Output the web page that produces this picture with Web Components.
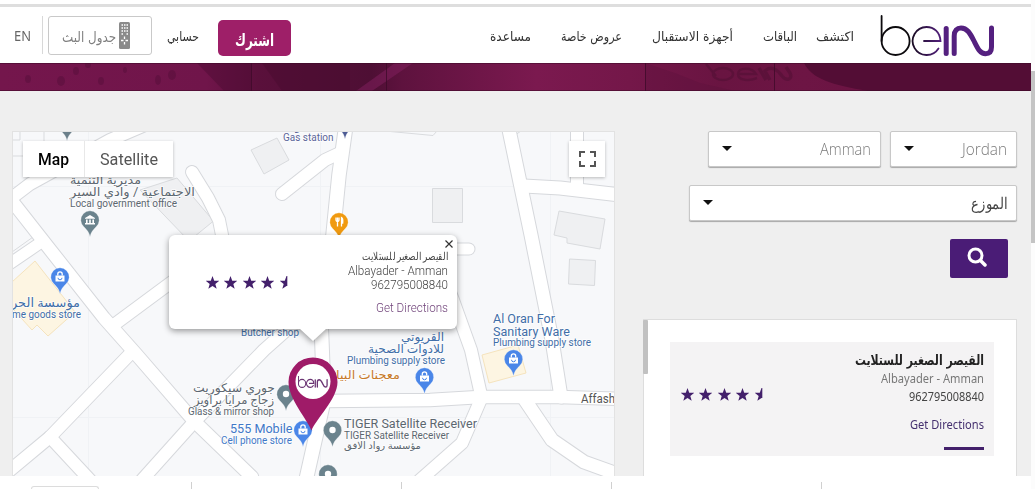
<!DOCTYPE html>
<html lang="ar">
<head>
<meta charset="utf-8">
<title>beIN</title>
<style>
  body {
    margin: 0;
    width: 1035px;
    height: 489px;
    overflow: hidden;
    background: #fff;
    font-family: "Noto Sans", "DejaVu Sans", sans-serif;
  }
</style>
</head>
<body>
<bein-page></bein-page>

<script>
// Text squeezed or stretched to a fixed width
class FitText extends HTMLElement {
  connectedCallback() {
    if (this.shadowRoot) return;
    const w = Number(this.getAttribute('w'));
    this.attachShadow({ mode: 'open' });
    this.shadowRoot.innerHTML = `
      <style>
        :host { display: block; direction: ltr; width: ${w}px; white-space: nowrap; flex: none; }
        span { display: inline-block; transform-origin: 0 50%; }
      </style>
      <span><slot></slot></span>
    `;
    const span = this.shadowRoot.querySelector('span');
    new ResizeObserver(([entry]) => {
      span.style.transform = `scaleX(${w / entry.contentRect.width})`;
    }).observe(span);
  }
}
customElements.define('fit-text', FitText);

class BeinLogo extends HTMLElement {
  connectedCallback() {
    this.attachShadow({ mode: 'open' });
    const mono = this.getAttribute('mono');
    const thin = this.getAttribute('thin') || 1.8;
    this.shadowRoot.innerHTML = `
      <style>
        :host { display: block; flex: none; }
        svg { display: block; width: 100%; height: 100%; }
      </style>
      <svg viewBox="0 0 115 42" fill="none" stroke-linecap="round" preserveAspectRatio="none">
        <defs>
          <linearGradient id="fade" x1="30" x2="62" y1="0" y2="0" gradientUnits="userSpaceOnUse">
            <stop offset="0" stop-color="${mono || '#150a1c'}"/>
            <stop offset="1" stop-color="${mono || '#54207f'}"/>
          </linearGradient>
        </defs>
        <path d="M1.6 1V26" stroke="${mono || '#0c0a0d'}" stroke-width="${thin}"/>
        <circle cx="15.6" cy="26" r="14" stroke="${mono || '#0c0a0d'}" stroke-width="${thin}"/>
        <path d="M44 26H60.500C60 17 54 12 46.500 12A14 14 0 1 0 58.500 33.500" stroke="url(#fade)" stroke-width="${thin}"/>
        <path d="M66.200 13.500V38.500" stroke="${mono || '#54207f'}" stroke-width="5"/>
        <path d="M74.200 38.500V21C74.200 15.500 77 13 81 13C87 13 90 18 94 26C98 34 100 38.700 105.500 38.700C110 38.700 111.500 36 111.500 32V13" stroke="${mono || '#54207f'}" stroke-width="5"/>
      </svg>
    `;
  }
}
customElements.define('bein-logo', BeinLogo);

class StarRating extends HTMLElement {
  connectedCallback() {
    this.attachShadow({ mode: 'open' });
    const star = '<svg viewBox="0 0 24 24"><path d="M12 0l3.200 8.600 9 .4-7 5.600 2.500 8.900L12 18.400 4.300 23.500l2.500-8.900-7-5.600 9-.4z"/></svg>';
    const half = '<svg viewBox="0 0 24 24"><path d="M13.500 0V18.400H12L4.300 23.500l2.500-8.900-7-5.600 9-.4L12 0z"/></svg>';
    this.shadowRoot.innerHTML = `
      <style>
        :host { display: flex; direction: ltr; gap: 5.4px; }
        svg { width: 13px; height: 13px; fill: #43206b; }
      </style>
      ${star.repeat(4)}${half}
    `;
  }
}
customElements.define('star-rating', StarRating);

class SiteHeader extends HTMLElement {
  connectedCallback() {
    this.attachShadow({ mode: 'open' });
    this.shadowRoot.innerHTML = `
      <style>
        :host { display: block; background: #fff; }
        .rule { height: 3px; margin-top: 4px; background: #dedede; }
        header {
          direction: rtl;
          display: flex;
          align-items: center;
          box-sizing: border-box;
          height: 56px;
          padding: 0 36px 0 14px;
          color: #333;
          font: 13px/24px "DejaVu Sans", sans-serif;
        }
        bein-logo { width: 115px; height: 42px; margin-top: 1px; margin-left: 26px; }
        nav { display: flex; flex: 1; margin-top: 4px; }
        nav fit-text { margin-left: 30px; }
        nav fit-text:first-child { margin-left: 19px; }
        .subscribe {
          display: flex;
          align-items: center;
          justify-content: center;
          width: 73px;
          height: 36px;
          margin: 6px 0 0 19px;
          background: #9e1f68;
          border-radius: 5px;
          color: #fff;
          font-size: 17px;
          font-weight: bold;
        }
        .subscribe fit-text { margin-top: 3px; }
        .account { margin: 4px 0 0 15px; }
        .schedule {
          display: flex;
          align-items: center;
          box-sizing: border-box;
          width: 104px;
          height: 39px;
          padding: 3px 21px 0 0;
          gap: 3px;
          border: 1px solid #c9c9c9;
          border-radius: 3px;
          color: #808080;
          font-size: 14px;
        }
        .schedule svg { width: 11px; height: 27px; margin-top: -3px; }
        .split { width: 1px; height: 38px; margin: 0 5px 0 11px; background: #d8d8d8; }
        .lang { color: #666; font: 15px/20px "Noto Sans", sans-serif; }
      </style>
      <div class="rule"></div>
      <header>
        <bein-logo></bein-logo>
        <nav>
          <fit-text w="38">اكتشف</fit-text>
          <fit-text w="34">الباقات</fit-text>
          <fit-text w="81">أجهزة الاستقبال</fit-text>
          <fit-text w="61">عروض خاصة</fit-text>
          <fit-text w="41">مساعدة</fit-text>
        </nav>
        <div class="subscribe"><fit-text w="39">اشترك</fit-text></div>
        <fit-text class="account" w="32">حسابي</fit-text>
        <div class="schedule">
          <svg viewBox="0 0 11 27">
            <rect width="11" height="27" rx="1.500" fill="#8b8b8b"/>
            <path d="M2.500 3h1.500M5 3h1.500M7.500 3h1.500M2.500 6h1.500M5 6h1.500M7.500 6h1.500M2.500 9h1.500M5 9h1.500M7.500 9h1.500M2.500 12h1.500M7.500 12h1.500M2 18.500h2.500M6.500 18.500h2.500M5.500 14.500v2.500M5.500 20v2.500" stroke="#fff" stroke-width="1.300"/>
          </svg>
          <fit-text w="54">جدول البث</fit-text>
        </div>
        <div class="split"></div>
        <fit-text class="lang" w="17">EN</fit-text>
      </header>
    `;
  }
}
customElements.define('site-header', SiteHeader);

class HeroStrip extends HTMLElement {
  connectedCallback() {
    this.attachShadow({ mode: 'open' });
    this.shadowRoot.innerHTML = `
      <style>
        :host { display: block; height: 28px; }
        svg { display: block; }
      </style>
      <svg width="1031" height="28" viewBox="0 0 1031 28">
        <defs>
          <linearGradient id="bg">
            <stop offset="0" stop-color="#74164c"/>
            <stop offset=".2" stop-color="#70154a"/>
            <stop offset=".25" stop-color="#5a103b"/>
            <stop offset=".36" stop-color="#4e0f34"/>
            <stop offset=".39" stop-color="#5e123e"/>
            <stop offset=".52" stop-color="#7b194f"/>
            <stop offset=".61" stop-color="#741749"/>
            <stop offset=".7" stop-color="#691441"/>
            <stop offset=".78" stop-color="#6d1544"/>
            <stop offset="1" stop-color="#650f3f"/>
          </linearGradient>
        </defs>
        <rect width="1031" height="28" fill="url(#bg)"/>
        <path d="M197 0H251V28H224Z" fill="#4d0c34" opacity=".5"/>
        <path d="M262 0H350V28H282Z" fill="#470b2f" opacity=".45"/>
        <path d="M356 28L395 0H413L372 28Z" fill="#842060" opacity=".5"/>
        <path d="M675 10L700 20L735 28H645V0Z" fill="#541036" opacity=".25"/>
        <path d="M804 0C812 16 832 22 868 28H1031V0Z" fill="#530d35"/>
        <g fill="#45092f" opacity=".3">
          <ellipse cx="28" cy="16" rx="3" ry="4"/><ellipse cx="61" cy="18" rx="4" ry="5"/>
          <ellipse cx="76" cy="8" rx="3" ry="4"/><ellipse cx="101" cy="18" rx="3" ry="4"/>
          <ellipse cx="158" cy="17" rx="3" ry="5"/><ellipse cx="172" cy="12" rx="4" ry="5"/>
          <ellipse cx="88" cy="2" rx="3" ry="3"/><ellipse cx="125" cy="7" rx="2" ry="3"/>
        </g>
        <path d="M251.500 0V28M386.500 0V28M645.500 0V28M774.500 0V28" stroke="#3c0a28" opacity=".75"/>
        <path d="M0 .5H1031M0 27.500H1031" stroke="#3c0a28" opacity=".5"/>
        <g fill="none" stroke="#430c2c" stroke-width="2.500" opacity=".35">
          <path d="M706 1L716 13"/><ellipse cx="723" cy="11" rx="10" ry="6"/>
          <path d="M737 11H756C752 4 738 4 738 11C738 18 750 18 757 15"/>
          <path d="M759 5L766 17M770 17L765 8C771 2 778 7 782 13C787 19 793 16 790 10L786 4" stroke-width="3.500"/>
        </g>
      </svg>
    `;
  }
}
customElements.define('hero-strip', HeroStrip);

// Roads: points and width, in map canvas units
const ROADS = [
  ['5,203 30,184 110,140 145,125', 12],
  ['8,196 48,247 104,318 136,354 194,421 252,477', 12.5],
  ['5,267 40,243', 11],
  ['115,324 169,284 200,262', 12],
  ['282,194 325,160 342,152', 12],
  ['192,172 208,198 219,220 224,245', 12],
  ['346,125 339,175 333,235 320,300 322,345 324,400 306,480', 13.5],
  ['325,401 430,400 480,397 560,397 620,399', 12.5],
  ['420,480 462,443 481,399', 12],
  ['440,268 453,300 471,350 481,395', 12],
  ['508,125 531,235 552,340 561,397', 13],
  ['524,186 560,188 620,195', 13],
  ['525,400 552,440 584,462 620,475', 13],
  ['130,354 50,437 8,472', 12],
  ['50,437 90,480', 12],
  ['194,422 142,480', 12],
  ['194,422 264,350 300,318', 12],
  ['440,249 469,249', 11],
  ['577,125 577,187', 12]
];

const PINS = [
  [67, 124, '#6b7f8a', 'dot'], [345, 122, '#4d5c94', 'dot'],
  [90, 220, '#6b838d', 'office'], [339, 222, '#f09a10', 'food'],
  [60, 277, '#4a86e8', 'bag'], [424.5, 377, '#4a86e8', 'bag'],
  [513.5, 359, '#4a86e8', 'bag'], [286, 394, '#6b838d', 'dot'],
  [303, 430, '#4a86e8', 'bag'], [332.5, 430, '#6b838d', 'dot'],
  [328, 474, '#6b838d', 'dot']
];

const GLYPHS = {
  dot: '<circle r="3.200" fill="#fff"/>',
  bag: '<path d="M-4.500-1.500h9v6h-9z" fill="#fff"/><path d="M-2.200-1.500v-1.500a2.200 2.200 0 0 1 4.400 0v1.500" fill="none" stroke="#fff" stroke-width="1.300"/><path d="M-2 .8a2 2 0 0 0 4 0" fill="none" stroke="#4a86e8"/>',
  food: '<path d="M-3-4.500v2.500a1.500 1.500 0 0 0 3 0v-2.500M-1.500-4.500v9M2.500 4.500v-9c1.500.8 1.500 3 1.200 5.500h-1.200" fill="none" stroke="#fff" stroke-width="1.300"/>',
  office: '<path d="M-5-2l5-3 5 3v.8h-10zM-4-.5h1.600v3.500h-1.600zM-.8-.5h1.600v3.500h-1.600zM2.400-.5h1.600v3.500h-1.600zM-5 3h10v1.500h-10z" fill="#fff"/>'
};

// Labels: text, left, right, baseline, size, colour
const GRAY = '#5c6770';
const BLUE = '#3f6ea8';
const LABELS = [
  ['جو بترول', 287, 330, 130, 10, '#5b659a'],
  ['Gas station', 283, 333.5, 141, 10.5, '#5b659a'],
  ['مديرية التنمية', 70, 141, 184, 12, GRAY],
  ['الاجتماعية / وادي السير', 70, 195, 196, 12, GRAY],
  ['Local government office', 70, 177, 207, 10.5, GRAY],
  ['مؤسسة الحر', 11, 80, 307, 12.5, BLUE],
  ['me goods store', 12, 81, 318, 10.5, BLUE],
  ['Butcher shop', 241, 299, 336, 10.5, BLUE],
  ['القريوتي', 401, 444, 341, 12, BLUE],
  ['للادوات الصحية', 368, 444, 353, 12, BLUE],
  ['Plumbing supply store', 347, 445, 364, 10.5, BLUE],
  ['معجنات البيا', 336, 400, 379, 12, '#c77a2a'],
  ['Al Oran For', 493, 555, 323, 12, BLUE],
  ['Sanitary Ware', 493, 570, 335.5, 12, BLUE],
  ['Plumbing supply store', 493, 591, 346, 10.5, BLUE],
  ['Affash', 581, 615, 403, 12, '#555'],
  ['جوري سيكوريت', 193, 275, 392, 12, GRAY],
  ['زجاج مرايا براويز', 194, 274, 404, 12, GRAY],
  ['Glass & mirror shop', 188, 274, 415, 10.5, GRAY],
  ['555 Mobile', 230, 292.5, 433, 12.5, '#3f78c8'],
  ['Cell phone store', 221, 292, 444, 10.5, '#3f78c8'],
  ['TIGER Satellite Receiver', 344, 477, 428, 12.5, GRAY],
  ['TIGER Satellite Receiver', 344, 449, 438.5, 10.5, GRAY],
  ['مؤسسة رواد الافق', 344, 421, 449, 10, GRAY]
];

class MapCanvas extends HTMLElement {
  connectedCallback() {
    this.attachShadow({ mode: 'open' });
    const lines = (extra, color) => ROADS.map(([pts, w]) =>
      `<polyline points="${pts}" stroke="${color}" stroke-width="${w + extra}"/>`).join('');
    const pins = PINS.map(([x, y, color, glyph]) => `
      <g transform="translate(${x} ${y})">
        <path d="M0 17C-1 12-3 10-6 7A9.200 9.200 0 1 1 6 7C3 10 1 12 0 17Z" fill="${color}" stroke="#fff" stroke-opacity=".6" stroke-width=".5"/>
        ${GLYPHS[glyph]}
      </g>`).join('');
    const labels = LABELS.map(([text, x1, x2, y, size, color]) =>
      `<text x="${x1}" y="${y}" textLength="${x2 - x1}" lengthAdjust="spacingAndGlyphs" font-size="${size}" fill="${color}">${text.replace('&', '&amp;')}</text>`).join('');
    this.shadowRoot.innerHTML = `
      <style>
        :host { display: block; }
        svg { display: block; }
        text { font-family: Roboto, "DejaVu Sans", sans-serif; paint-order: stroke; stroke: #fff; stroke-width: 1.5px; stroke-opacity: .8; }
      </style>
      <svg width="603" height="345" viewBox="12 131 603 345">
        <rect x="12" y="131" width="603" height="345" fill="#f7f8fa"/>
        <path d="M88.500 131V476M320.500 131V476M550.500 131V476M12 186.500H615M12 417.500H615" stroke="#f0f2f5"/>
        <g fill="#eff0f2" stroke="#d9dbde">
          <path d="M432.500 188.500H462.500V222.500H432.500Z"/>
          <path d="M251 150L277 138L289 160L264 174Z"/>
          <path d="M559 211L605 219L600 249L567 243V238L554 235Z"/>
          <path d="M569.500 259L595.500 260.500L594.500 285.500L568.500 284Z"/>
          <path d="M140 190L177 178L213.500 221L189 241Z"/>
          <path d="M12 156H44V131M12 140H20V131M385 131L433 135.500L437 131M508 140L521 131" fill="none"/>
          <path d="M20 196L50 178M12 252L33 237L12 208" fill="none"/>
        </g>
        <g fill="#fdf5e2" stroke="#f5e3bd">
          <path d="M12 282L35 261L75 312L48 336L37 325L32 330L12 308Z"/>
          <path d="M482 355L518 345L526 373L489 383Z"/>
        </g>
        <g fill="none" stroke-linecap="round" stroke-linejoin="round">
          ${lines(2, '#d6d8dc')}
          ${lines(0, '#fff')}
        </g>
        ${pins}
        ${labels}
        <rect x="12.500" y="131.500" width="602" height="345" fill="none" stroke="#e2e2e2"/>
      </svg>
    `;
  }
}
customElements.define('map-canvas', MapCanvas);

class MapPopup extends HTMLElement {
  connectedCallback() {
    this.attachShadow({ mode: 'open' });
    this.shadowRoot.innerHTML = `
      <style>
        :host {
          display: flex;
          box-sizing: border-box;
          width: 288px;
          height: 94px;
          padding: 0 9px 0 37px;
          background: #fff;
          border-radius: 6px;
          filter: drop-shadow(0 2px 3px rgba(0, 0, 0, .4));
          color: #444;
          font: 300 12px/14px Roboto, "DejaVu Sans", sans-serif;
        }
        star-rating { margin-top: 41px; }
        .info { flex: 1; display: flex; flex-direction: column; align-items: flex-end; padding-top: 15px; }
        .name { font-size: 10.5px; }
        .link { margin-top: 9px; color: #70437a; }
        .close { position: absolute; top: 5px; right: 4px; width: 8px; height: 8px; }
        .tail { position: absolute; top: 93px; left: 130px; width: 28px; height: 13px; fill: #fff; }
      </style>
      <star-rating></star-rating>
      <div class="info">
        <fit-text class="name" w="86">القيصر الصغير للستلايت</fit-text>
        <fit-text w="100">Albayader - Amman</fit-text>
        <fit-text w="77">962795008840</fit-text>
        <fit-text class="link" w="72">Get Directions</fit-text>
      </div>
      <svg class="close" viewBox="0 0 8 8"><path d="M.5.5l7 7M7.500.5l-7 7" stroke="#333" stroke-width="1.200"/></svg>
      <svg class="tail" viewBox="0 0 28 13"><path d="M0 0H28L14 13Z"/></svg>
    `;
  }
}
customElements.define('map-popup', MapPopup);

class StoreMap extends HTMLElement {
  connectedCallback() {
    this.attachShadow({ mode: 'open' });
    this.shadowRoot.innerHTML = `
      <style>
        :host { display: block; position: relative; width: 603px; height: 345px; overflow: hidden; }
        .types {
          position: absolute;
          top: 10px;
          left: 11px;
          display: flex;
          align-items: center;
          width: 150px;
          height: 36px;
          background: #fff;
          box-shadow: 0 1px 3px rgba(0, 0, 0, .25);
          color: #555;
          font: 17px/36px Roboto, sans-serif;
        }
        .map { padding: 0 15px; color: #000; font-weight: 500; border-right: 1px solid #e8e8e8; }
        .sat { padding-left: 15px; }
        .full {
          position: absolute;
          top: 10px;
          right: 10px;
          display: flex;
          align-items: center;
          justify-content: center;
          width: 36px;
          height: 36px;
          background: #fff;
          box-shadow: 0 1px 3px rgba(0, 0, 0, .25);
        }
        .full svg { width: 17px; height: 16px; }
        map-popup { position: absolute; left: 157px; top: 104px; }
        .pin { position: absolute; left: 276px; top: 226px; width: 50px; height: 74px; }
        .pin svg { display: block; }
        .pin bein-logo { position: absolute; left: 10px; top: 19px; width: 30px; height: 12px; }
      </style>
      <map-canvas></map-canvas>
      <div class="pin">
        <svg width="50" height="74" viewBox="0 0 50 74">
          <path d="M23.500 73.500C19 62 .5 42 .5 25A24.500 24.500 0 0 1 49.500 25C49.500 42 28 62 23.500 73.500Z" fill="#9f1b68"/>
          <circle cx="25" cy="24.500" r="17.500" fill="#fff"/>
        </svg>
        <bein-logo mono="#6b3573" thin="4"></bein-logo>
      </div>
      <map-popup></map-popup>
      <div class="types">
        <div class="map"><fit-text w="31">Map</fit-text></div>
        <div class="sat"><fit-text w="58">Satellite</fit-text></div>
      </div>
      <div class="full">
        <svg viewBox="0 0 17 16" fill="none" stroke="#555" stroke-width="2">
          <path d="M1 6V1H6M11 1H16V6M16 10V15H11M6 15H1V10"/>
        </svg>
      </div>
    `;
  }
}
customElements.define('store-map', StoreMap);

class SelectBox extends HTMLElement {
  connectedCallback() {
    this.attachShadow({ mode: 'open' });
    this.shadowRoot.innerHTML = `
      <style>
        :host {
          display: flex;
          align-items: center;
          justify-content: space-between;
          box-sizing: border-box;
          height: 36px;
          padding: 0 9px 0 13px;
          background: #fff;
          border: 1px solid #c8c8c8;
          border-radius: 2px;
          box-shadow: 0 1px 1px rgba(0, 0, 0, .3);
          color: #7b7b7b;
          font: 300 16px/24px "Open Sans", "DejaVu Sans", sans-serif;
        }
        svg { width: 10px; height: 5px; margin-top: -2px; }
      </style>
      <svg viewBox="0 0 10 5"><path d="M0 0H10L5 5Z" fill="#111"/></svg>
      <slot></slot>
    `;
  }
}
customElements.define('select-box', SelectBox);

class StoreCard extends HTMLElement {
  connectedCallback() {
    this.attachShadow({ mode: 'open' });
    this.shadowRoot.innerHTML = `
      <style>
        :host {
          display: flex;
          box-sizing: border-box;
          height: 114px;
          padding: 0 10px 0 11px;
          background: #f4f3f4;
          color: #444;
          font: 12px/18px "Noto Sans", sans-serif;
        }
        star-rating { margin-top: 46px; }
        .info { flex: 1; display: flex; flex-direction: column; align-items: flex-end; padding-top: 8px; }
        .name { color: #222; font: bold 14px/20px "DejaVu Sans", sans-serif; }
        .city { color: #777; }
        .link { margin-top: 10px; color: #45306f; }
        .bar { width: 40px; height: 3px; margin-top: 13px; background: #43206b; }
      </style>
      <star-rating></star-rating>
      <div class="info">
        <fit-text class="name" w="129">القيصر الصغير للستلايت</fit-text>
        <fit-text class="city" w="103">Albayader - Amman</fit-text>
        <fit-text w="75">962795008840</fit-text>
        <fit-text class="link" w="74">Get Directions</fit-text>
        <div class="bar"></div>
      </div>
    `;
  }
}
customElements.define('store-card', StoreCard);

class StoreFinder extends HTMLElement {
  connectedCallback() {
    this.attachShadow({ mode: 'open' });
    this.shadowRoot.innerHTML = `
      <style>
        :host { display: flex; flex-direction: column; align-items: flex-end; width: 374px; }
        .row { display: flex; gap: 9px; }
        .city { width: 173px; }
        .country { width: 127px; }
        .dealer { width: 328px; margin-top: 18px; color: #444; }
        .search {
          display: flex;
          align-items: center;
          justify-content: center;
          width: 58px;
          height: 39px;
          margin: 18px 9px 0 0;
          background: #4a1c76;
          border-radius: 2px;
        }
        .search svg { width: 20px; height: 20px; margin: -3px 4px 0 0; }
        .results {
          display: flex;
          box-sizing: border-box;
          width: 374px;
          flex: 1;
          margin-top: 41px;
          background: #fff;
          border: 1px solid #ddd;
          border-bottom: 0;
        }
        .thumb { width: 5px; height: 54px; margin: 0 0 0 -1px; background: #c1c1c1; border-radius: 1px; }
        store-card { width: 324px; margin: 22px 0 0 22px; }
      </style>
      <div class="row">
        <select-box class="city"><fit-text w="51">Amman</fit-text></select-box>
        <select-box class="country"><fit-text w="45">Jordan</fit-text></select-box>
      </div>
      <select-box class="dealer"><fit-text w="36">الموزع</fit-text></select-box>
      <div class="search">
        <svg viewBox="0 0 20 20" fill="none" stroke="#fff" stroke-linecap="round">
          <circle cx="8.500" cy="8.500" r="6.500" stroke-width="3"/>
          <path d="M13.500 13.500L18 18" stroke-width="3.500"/>
        </svg>
      </div>
      <div class="results">
        <div class="thumb"></div>
        <store-card></store-card>
      </div>
    `;
  }
}
customElements.define('store-finder', StoreFinder);

class BeinPage extends HTMLElement {
  connectedCallback() {
    this.attachShadow({ mode: 'open' });
    this.shadowRoot.innerHTML = `
      <style>
        :host { display: flex; width: 1035px; height: 489px; }
        .page { width: 1031px; }
        main {
          display: flex;
          justify-content: space-between;
          box-sizing: border-box;
          height: 385px;
          padding: 40px 14px 0 12px;
          background: #efefef;
        }
        .scroll { flex: 1; padding-top: 71px; background: #fcfcfc; }
        .scroll div { height: 172px; background: #c4c4c4; }
        footer { display: flex; height: 13px; padding-left: 31px; background: #fff; }
        .stub { width: 70px; height: 3px; margin: 10px 92px 0 0; border: 1px solid #dcdcdc; border-bottom: 0; border-radius: 3px 3px 0 0; box-sizing: border-box; }
        .tick { width: 1px; height: 7px; margin: 6px 209px 0 0; background: #d0d0d0; }
      </style>
      <div class="page">
        <site-header></site-header>
        <hero-strip></hero-strip>
        <main>
          <store-map></store-map>
          <store-finder></store-finder>
        </main>
        <footer>
          <div class="stub"></div>
          <div class="tick"></div><div class="tick"></div><div class="tick"></div><div class="tick"></div>
        </footer>
      </div>
      <div class="scroll"><div></div></div>
    `;
  }
}
customElements.define('bein-page', BeinPage);
</script>
</body>
</html>
